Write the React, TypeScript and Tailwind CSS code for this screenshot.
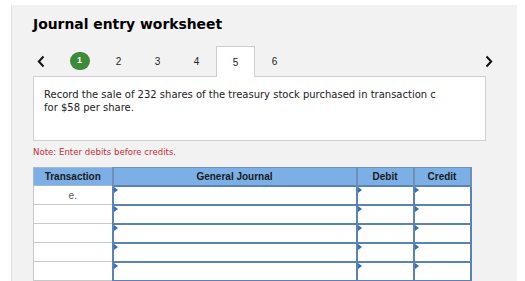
import React from "react";

const tabs = ["1", "2", "3", "4", "5", "6"];
const rows = ["e.", "", "", "", "", ""];

function Chevron({ dir }: { dir: "left" | "right" }) {
  return (
    <svg width="8" height="13" viewBox="0 0 8 13" className="block">
      <polyline
        points={dir === "left" ? "6.5,1.5 1.8,6.5 6.5,11.5" : "1.5,1.5 6.2,6.5 1.5,11.5"}
        fill="none"
        stroke="#111"
        strokeWidth="2"
      />
    </svg>
  );
}

function Marker() {
  return (
    <span className="absolute left-0 top-0 h-0 w-0 border-y-[3px] border-l-[4px] border-y-transparent border-l-[#2f6fc0]" />
  );
}

export default function App() {
  return (
    <div className="h-[281px] w-[525px] overflow-hidden bg-white font-['DejaVu_Sans',sans-serif]">
      <div className="ml-[11px] mt-[5px] h-[300px] w-[506px] border-l border-[#e2e2e2] bg-[#f2f2f2] pl-[21px]">
        <h1 className="pt-[11px] text-[13.9px] font-bold leading-[16px] text-black">
          Journal entry worksheet
        </h1>

        <div className="mt-[14px] flex h-[30px] w-[460px] items-center">
          <div className="ml-[4px]">
            <Chevron dir="left" />
          </div>
          <div className="ml-[15px] flex h-full">
            {tabs.map((t) =>
              t === "1" ? (
                <div key={t} className="flex w-[39px] items-center justify-center">
                  <span className="flex h-[18px] w-[20px] items-center justify-center rounded-full bg-[#3d8a3a] font-['Liberation_Sans',sans-serif] text-[9px] font-bold text-white">
                    1
                  </span>
                </div>
              ) : t === "5" ? (
                <div
                  key={t}
                  className="relative z-10 -mb-px flex w-[39px] items-center justify-center border border-b-0 border-[#cfcfcf] bg-white font-['Liberation_Sans',sans-serif] text-[10px] text-[#222]"
                >
                  {t}
                </div>
              ) : (
                <div
                  key={t}
                  className="flex w-[39px] items-center justify-center font-['Liberation_Sans',sans-serif] text-[10px] text-[#222]"
                >
                  {t}
                </div>
              )
            )}
          </div>
          <div className="ml-auto">
            <Chevron dir="right" />
          </div>
        </div>

        <div className="h-[65px] w-[453px] border border-[#cfcfcf] bg-white px-[10px] pt-[11px] text-[10px] leading-[13px] text-[#222]">
          Record the sale of 232 shares of the treasury stock purchased in transaction c
          <br />
          for $58 per share.
        </div>

        <p className="mt-[5px] text-[8.6px] leading-[12px] text-[#c8303a]">
          Note: Enter debits before credits.
        </p>

        <table className="mt-[9px] w-[437px] table-fixed border-collapse font-['Liberation_Sans',sans-serif]">
          <colgroup>
            <col className="w-[79px]" />
            <col className="w-[244px]" />
            <col className="w-[57px]" />
            <col className="w-[57px]" />
          </colgroup>
          <thead>
            <tr className="h-[18px] bg-[#7cafe5] text-[10px] font-bold text-[#1a1a1a]">
              <th className="border border-[#a8b8c8] border-r-[#4a5a70] p-0">Transaction</th>
              <th className="border border-[#6f8fb5] border-x-2 p-0">General Journal</th>
              <th className="border border-[#6f8fb5] border-x-2 p-0">Debit</th>
              <th className="border border-[#6f8fb5] border-x-2 p-0">Credit</th>
            </tr>
          </thead>
          <tbody>
            {rows.map((r, i) => (
              <tr key={i} className="h-[19px] bg-white">
                <td className="border border-[#c8c8c8] p-0 text-center text-[10px] text-[#555]">
                  {r}
                </td>
                <td className="relative border-2 border-[#5a82b5] p-0">
                  <Marker />
                </td>
                <td className="relative border-2 border-[#5a82b5] p-0">
                  <Marker />
                </td>
                <td className="relative border-2 border-[#5a82b5] p-0">
                  <Marker />
                </td>
              </tr>
            ))}
          </tbody>
        </table>
      </div>
    </div>
  );
}
